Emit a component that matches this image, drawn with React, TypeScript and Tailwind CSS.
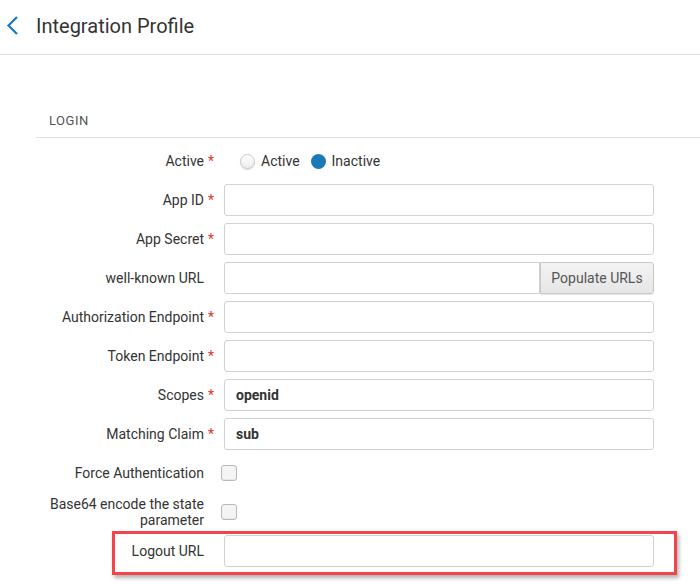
import React from "react";

const labelCls = "relative text-right text-[14px] leading-[16px] text-[#333]";
const inputCls =
  "h-[32px] w-[430px] rounded-[3px] border border-[#cfd2d6] bg-white px-[11px] text-[14px] font-bold text-[#333] outline-none";

function Label({ text, required }: { text: string; required?: boolean }) {
  return (
    <div className="flex w-[168px] shrink-0 justify-end">
      <span className={labelCls}>
        {text}
        {required && <span className="absolute left-full ml-[4px] text-[#e8322c]">*</span>}
      </span>
    </div>
  );
}

function Row({ children, className = "" }: { children: React.ReactNode; className?: string }) {
  return <div className={`flex items-center gap-[20px] ${className}`}>{children}</div>;
}

function Checkbox() {
  return (
    <div className="ml-[-3px] h-[16px] w-[16px] rounded-[3px] border border-[#b9b9b9] bg-[#f4f4f4] shadow-[inset_0_-1px_1px_rgba(0,0,0,0.06)]" />
  );
}

export default function App() {
  return (
    <div className="h-[584px] w-[700px] overflow-hidden bg-white font-['Roboto',sans-serif] text-[#333]">
      {/* Header */}
      <div className="flex h-[55px] items-center border-b border-[#e3e3e3]">
        <svg width="36" height="55" viewBox="0 0 36 55" className="shrink-0">
          <polyline points="17,17 8.5,25.5 17,34" fill="none" stroke="#1a78c2" strokeWidth="2.2" />
        </svg>
        <h1 className="pb-[2px] text-[20px] leading-[24px] text-[#333]">Integration Profile</h1>
      </div>

      <div className="pl-[36px] pt-[56px]">
        <div className="border-b border-[#e3e3e3] pb-[6px] pl-[13px] text-[13px] leading-[20px] tracking-[0.5px] text-[#555]">
          LOGIN
        </div>

        <div className="mt-[7px] flex flex-col gap-[7px]">
          <Row className="h-[32px]">
            <Label text="Active" required />
            <div className="flex items-center text-[14px]">
              <span className="ml-[16px] h-[15px] w-[15px] rounded-full border border-[#c8c8c8] bg-gradient-to-b from-white to-[#ececec] shadow-[0_1px_1px_rgba(0,0,0,0.15)]" />
              <span className="ml-[6px]">Active</span>
              <span className="ml-[11px] h-[15px] w-[15px] rounded-full bg-[#1b78b9]" />
              <span className="ml-[6px]">Inactive</span>
            </div>
          </Row>
          <Row>
            <Label text="App ID" required />
            <input className={inputCls} />
          </Row>
          <Row>
            <Label text="App Secret" required />
            <input className={inputCls} />
          </Row>
          <Row>
            <Label text="well-known URL" />
            <div className="flex">
              <input className="h-[32px] w-[316px] rounded-l-[3px] border border-[#cfd2d6] bg-white outline-none" />
              <button className="h-[32px] w-[114px] rounded-r-[3px] border border-[#c8c8c8] bg-gradient-to-b from-[#f3f3f3] to-[#e6e6e6] text-[14px] text-[#555] shadow-[0_1px_1px_rgba(0,0,0,0.1)]">
                Populate URLs
              </button>
            </div>
          </Row>
          <Row>
            <Label text="Authorization Endpoint" required />
            <input className={inputCls} />
          </Row>
          <Row>
            <Label text="Token Endpoint" required />
            <input className={inputCls} />
          </Row>
          <Row>
            <Label text="Scopes" required />
            <input className={inputCls} defaultValue="openid" />
          </Row>
          <Row>
            <Label text="Matching Claim" required />
            <input className={inputCls} defaultValue="sub" />
          </Row>
          <Row className="h-[32px]">
            <Label text="Force Authentication" />
            <Checkbox />
          </Row>
          <Row className="h-[32px]">
            <Label text="Base64 encode the state parameter" />
            <Checkbox />
          </Row>
          <div className="relative">
            <Row>
              <Label text="Logout URL" />
              <input className={inputCls + " font-normal"} />
            </Row>
            {/* annotation highlight */}
            <div className="pointer-events-none absolute left-[76px] top-[-4px] h-[44px] w-[565px] border-[3px] border-[#f2444a] shadow-[2px_3px_4px_rgba(0,0,0,0.3)]" />
          </div>
        </div>
      </div>
    </div>
  );
}
